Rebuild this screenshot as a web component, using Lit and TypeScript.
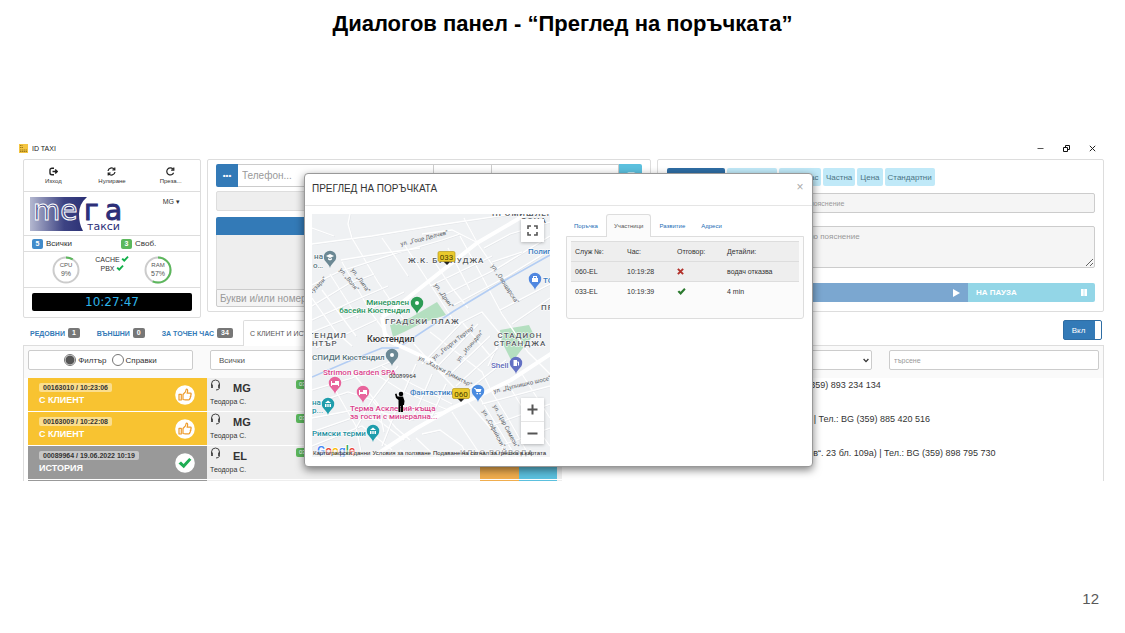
import { LitElement, html, svg, css } from "lit";
import { customElement, state } from "lit/decorators.js";
import { classMap } from "lit/directives/class-map.js";

const check = (color: string, size = 8) => html`<svg width=${size} height=${size} viewBox="0 0 10 10" aria-hidden="true">
  <path d="M0.6 5.4 L2.4 3.8 L4 5.4 L8 1.2 L9.6 2.7 L4.1 8.8 Z" fill=${color} />
</svg>`;

@customElement("city-map")
class CityMap extends LitElement {
  static styles = css`
    :host { display: block; position: relative; overflow: hidden; background: #eff1f3; }
    .canvas { position: absolute; top: 0; left: 0; font-family: Roboto, "Liberation Sans", sans-serif; }
    .street { fill: none; stroke: #fff; stroke-width: 1.3; }
    .thin { fill: none; stroke: #dfe2e6; stroke-width: 0.8; }
    .road { fill: none; stroke: #fff; stroke-width: 4; stroke-linejoin: round; }
    .river { fill: none; stroke: #b3cdf3; stroke-width: 1.6; }
    .park { fill: #b4dfc0; }
    .label { font-size: 8px; font-weight: 500; paint-order: stroke; stroke: #fff; stroke-width: 1px; }
    .area { font-size: 8px; fill: #55595e; letter-spacing: 1px; font-weight: 500; }
    .town { font-size: 9px; fill: #333; }
    .way { font-size: 6px; fill: #62666b; font-weight: 400; }
    .end { text-anchor: end; }
    .mid { text-anchor: middle; }
    .green { fill: #25925a; }
    .pink { fill: #d8408a; }
    .teal { fill: #1b8f9e; }
    .blue { fill: #3a7cc0; }
    .slate { fill: #56737c; }
    .indigo { fill: #5b69b8; }
    .code { font-size: 6px; fill: #333; }
    .plate { font-size: 8px; fill: #4d4100; text-anchor: middle; }
    .google { font-size: 12px; font-weight: 500; paint-order: stroke; stroke: #fff; stroke-width: 1.5px; }
    button { border: 0; padding: 0; margin: 0; background: #fff; width: 23px; height: 23px; display: grid; place-items: center; }
    .full, .zoom { position: absolute; right: 6px; box-shadow: 0 1px 3px rgba(0, 0, 0, 0.25); background: #fff; }
    .full { top: 5px; }
    .zoom { bottom: 13px; }
    .zoom button + button { border-top: 1px solid #e6e6e6; }
    .legal { position: absolute; left: 0; right: 0; bottom: 0; padding: 0 4px 0 1px; display: flex; justify-content: space-between; font: 6px/7px "Liberation Sans", sans-serif; background: rgba(245, 245, 245, 0.5); }
    .legal a { color: #222; text-decoration: none; white-space: nowrap; }
  `;

  pins: [number, number, string, string][] = [
    [18, 43, "#6b8894", "M-4 -1 L0 -3 L4 -1 L0 1Z M-2 1 L0 2 L2 1 V2.5 L0 3.5 L-2 2.5Z"],
    [105, 89, "#2c9c55", "M-2 0 A2 2 0 1 0 2 0 A2 2 0 1 0 -2 0Z"],
    [223, 65, "#5087e0", "M-3 -1 H3 V3 H-3Z M-2 -1 V-3 H2 V-1 H1 V-2 H-1 V-1Z"],
    [80, 141, "#6b8894", "M-2 0 A2 2 0 1 0 2 0 A2 2 0 1 0 -2 0Z"],
    [23, 169, "#e8649c", "M-4 -2 H-3 V0 H0 V-2 H4 V3 H3 V2 H-3 V3 H-4Z"],
    [51, 178, "#e8649c", "M-4 -2 H-3 V0 H0 V-2 H4 V3 H3 V2 H-3 V3 H-4Z"],
    [16, 190, "#1f9dac", "M-3 -1 L0 -3.5 L3 -1Z M-3 0 H-1.5 V3 H-3Z M-.7 0 H.7 V3 H-.7Z M1.5 0 H3 V3 H1.5Z"],
    [61, 217, "#1f9dac", "M-3 -1 L0 -3.5 L3 -1Z M-3 0 H-1.5 V3 H-3Z M-.7 0 H.7 V3 H-.7Z M1.5 0 H3 V3 H1.5Z"],
    [166, 177, "#4a8be0", "M-4 -3 H-2.5 L-2 -2 H3.5 L2.5 1 H-1.5 L-3 -2.2 H-4Z M-1.5 2 H0 V3.2 H-1.5Z M1.3 2 H2.8 V3.2 H1.3Z"],
    [204, 149, "#6371c4", "M-2.5 -3 H1 V3 H-2.5Z M1.5 -2 L3 -1 V2.5 H2 V0 H1.5Z"],
  ];

  streets = [
    "M0 14 L22 22 M0 30 L60 22 L120 12 L200 0", "M38 0 L36 10 L40 24 L66 68 L92 106", "M0 71 L26 58 L88 38 L130 26 L148 20",
    "M29 46 L66 40 L108 34", "M18 60 L46 104 M30 48 L60 100 L78 124", "M0 92 L36 70 L62 60", "M0 106 L48 84 L76 72",
    "M0 118 L56 96 L92 78", "M4 134 L64 106", "M0 84 L24 118 L40 132", "M10 76 L44 122", "M70 24 L84 44 L96 62", "M92 30 L118 70 L140 104",
    "M148 22 L172 66 L190 100 L216 138 L238 160", "M152 4 L166 30 L184 56", "M110 20 L140 16 L164 28", "M118 72 L180 42", "M130 82 L186 54 L238 22",
    "M140 92 L196 62 L238 36", "M120 44 L140 74 L156 94", "M136 34 L158 76", "M172 34 L198 20 L238 8", "M180 48 L210 38", "M200 110 L238 84",
    "M188 96 L238 70", "M142 112 L170 98 L190 122 L176 152", "M150 108 L180 144", "M118 118 L170 158 L178 174", "M102 130 L146 178",
    "M110 150 L150 108 M124 154 L166 110 M136 162 L178 122 M144 172 L186 134 M156 176 L194 146", "M0 176 L40 164 L82 146", "M0 190 L36 178 L60 186 L84 214 L98 226",
    "M0 204 L52 194 L98 206 L130 198", "M0 218 L40 204 L66 206 L92 226", "M0 232 L50 212 L70 228 L80 236", "M20 170 L44 212 L50 243",
    "M40 158 L66 190 L72 218", "M60 158 L92 178 L136 196", "M70 152 L100 170 L140 190", "M86 152 L60 186 L44 214", "M104 150 L84 196 L70 232",
    "M120 160 L100 206", "M134 170 L118 206", "M140 198 L170 243", "M110 220 L128 216 L150 232 L156 243", "M104 224 L124 243",
    "M156 188 L180 216 L196 243", "M168 184 L190 220 L204 243", "M180 178 L196 204 L218 243", "M196 170 L212 196 L238 232", "M210 160 L238 204",
    "M170 190 L238 172", "M178 212 L238 190", "M188 232 L238 214", "M88 236 L100 243",
  ];

  render() {
    return html`
      <svg class="canvas" width="238" height="243" viewBox="0 0 238 243" role="img" aria-label="Кюстендил">
        <path class="park" d="M125 88 L134 101 L110 109 L92 118 L81 123 L78 111 L98 104Z M188 116 L217 111 L222 121 L214 130 L200 148 L189 126Z" />
        ${this.streets.map((d) => svg`<path class="thin" d=${d} transform="translate(0.7 0.7)" /><path class="street" d=${d} />`)}
        <path class="river" d="M0 163 L35 148 L70 134 L86 134 L142 97 L190 68 L238 41" />
        <path class="road" d="M70 103 L78 98 L165 29 L218 -2 M70 103 L74 126 L88 132 L118 146 L134 160 M56 246 L105 214 L140 194 L158 186 L199 166 L240 139" />
        ${this.pins.map(([x, y, color, glyph]) => svg`<g transform="translate(${x} ${y})">
          <path fill=${color} d="M0 11 C-1 6 -6.2 5 -6.2 0 A6.2 6.2 0 0 1 6.2 0 C6.2 5 1 6 0 11Z" /><path fill="#fff" d=${glyph} />
        </g>`)}
        <g class="label">
          <text class="area mid" x="214" y="2">ПРОМИШЛЕНА</text><text class="area mid" x="222" y="9">ЗОНА</text>
          <text class="slate end" x="11" y="45">на</text><text class="slate" x="1" y="54">о…</text>
          <text class="area" x="96" y="49">Ж.К. БУЗЛУДЖА</text>
          <text class="green end" x="97" y="91">Минерален</text><text class="green end" x="98" y="99">басейн Кюстендил</text>
          <text class="area" x="73" y="110">ГРАДСКИ ПЛАЖ</text>
          <text class="town" x="55" y="128">Кюстендил</text>
          <text class="area end" x="35" y="124">ТЕНДИЛ</text><text class="area" x="0" y="132">НТЪР</text>
          <text class="area mid" x="208" y="124">СТАДИОН</text><text class="area mid" x="208" y="132">СТРАНДЖА</text>
          <text class="blue" x="216" y="40">Полигон</text><text class="blue" x="231" y="69">ТОП</text><text class="area" x="229" y="96">ПРОМ</text>
          <text class="slate" x="0" y="146">СПИДИ Кюстендил</text>
          <text class="pink" x="11" y="161">Strimon Garden SPA</text>
          <text class="blue" x="98" y="181">Фантастико</text>
          <text class="pink" x="38" y="197">Терма Асклепий-къща</text><text class="pink" x="38" y="205">за гости с минерална...</text>
          <text class="teal" x="0" y="191">на</text><text class="teal" x="0" y="199">р...</text>
          <text class="teal" x="0" y="222">Римски терми</text>
          <text class="indigo" x="179" y="154">Shell</text>
          <text class="area" x="148" y="241">ИЛЬО ВОЙВОДА</text>
        </g>
        <g class="way">
          <text transform="translate(89 32) rotate(-14)">ул. „Гоце Делчев“</text>
          <text transform="translate(27 56) rotate(52)">ул. „Воля“</text>
          <text transform="translate(39 56) rotate(55)">ул. „Липа“</text>
          <text transform="translate(0 80) rotate(-45)">тузари“</text>
          <text transform="translate(122 71) rotate(55)">ул. „Дрин“</text>
          <text transform="translate(179 52) rotate(57)">ул. „Овощарска“</text>
          <text transform="translate(122 146) rotate(-38)">ул. „Георги Тертер“</text>
          <text transform="translate(147 148) rotate(-50)">ул. „Илинден“</text>
          <text transform="translate(106 145) rotate(28)">ул. „Хаджи Димитър“</text>
          <text transform="translate(182 179) rotate(-13)">ул. „Дупнишко шосе“</text>
          <text transform="translate(181 192) rotate(62)">ул. „Цар Симеон“</text>
          <text transform="translate(170 197) rotate(62)">ул. „Софийски“</text>
        </g>
        <text class="code" x="77" y="164">00089964</text>
        <path fill="#222" d="M131 47 H139 L135 51Z M145 184 H153 L149 188Z" />
        <rect x="126" y="37.500" width="17" height="10" rx="1.500" fill="#eac92c" stroke="#b89a1c" stroke-width="0.700" />
        <text class="plate" x="134.500" y="45.500">033</text>
        <rect x="140.500" y="174.500" width="17" height="10" rx="1.500" fill="#eac92c" stroke="#b89a1c" stroke-width="0.700" />
        <text class="plate" x="149" y="182.500">060</text>
        <circle cx="89" cy="180" r="2.300" />
        <path d="M83 180 L84.500 179.500 L85.500 182.500 H91 L92.500 187 L92 191 H91 V198 H89 V192 H88.500 V198 H86.500 V186 L84 184Z" />
        <text class="google" x="5" y="241"><tspan fill="#4285f4">G</tspan><tspan fill="#ea4335">o</tspan><tspan fill="#fbbc05">o</tspan><tspan fill="#4285f4">g</tspan><tspan fill="#34a853">l</tspan><tspan fill="#ea4335">e</tspan></text>
      </svg>
      <button class="full" aria-label="Цял екран">
        <svg width="11" height="11" viewBox="0 0 11 11" fill="none" stroke="#555" stroke-width="1.600"><path d="M1 4V1H4 M7 1H10V4 M10 7V10H7 M4 10H1V7" /></svg>
      </button>
      <div class="zoom">
        <button aria-label="Увеличаване"><svg width="11" height="11" viewBox="0 0 11 11" stroke="#555" stroke-width="2"><path d="M0.500 5.500H10.500M5.500 0.500V10.500" /></svg></button>
        <button aria-label="Намаляване"><svg width="11" height="11" viewBox="0 0 11 11" stroke="#555" stroke-width="2"><path d="M0.500 5.500H10.500" /></svg></button>
      </div>
      <div class="legal"><a href="#">Картографски данни</a><a href="#">Условия за ползване</a><a href="#">Подаване на сигнал за грешка в картата</a></div>
    `;
  }
}

@customElement("order-dialog")
class OrderDialog extends LitElement {
  static styles = css`
    :host { display: block; background: #fff; border: 1px solid #999; border-radius: 4px; box-shadow: 0 3px 9px rgba(0, 0, 0, 0.5); box-sizing: border-box; }
    header { display: flex; justify-content: space-between; align-items: flex-start; padding: 8px 8px 9px 7px; border-bottom: 1px solid #e5e5e5; }
    h2 { margin: 0; font-weight: 400; font-size: 10px; line-height: 14px; color: #333; }
    button { font-family: inherit; }
    .close { border: 0; background: none; padding: 0; font-size: 12px; line-height: 10px; color: #aaa; width: 8px; }
    .body { display: grid; grid-template-columns: 238px 1fr; gap: 16px; padding: 8px 8px 9px 7px; }
    city-map { height: 243px; }
    .tabs { display: flex; height: 23px; position: relative; margin-bottom: -1px; }
    .tab { border: 1px solid transparent; border-bottom: 0; background: none; padding: 0 7px; font-size: 6px; color: #1a6cb5; border-radius: 3px 3px 0 0; }
    .tab.active { color: #555; background: #fbfbfb; border-color: #ddd; }
    .panel { border: 1px solid #ddd; border-radius: 0 0 3px 3px; background: #fbfbfb; padding: 4px 4px 17px; }
    table { width: 100%; border-collapse: collapse; font-size: 7px; color: #333; table-layout: fixed; }
    th, td { font-weight: 400; text-align: left; padding: 0 4px; height: 19px; line-height: 10px; border-top: 1px solid #ddd; }
    thead th, tbody tr:first-child td { background: #eee; }
    th:nth-child(1) { width: 44px; }
    th:nth-child(2), th:nth-child(3) { width: 42px; }
    svg { display: block; }
  `;

  @state() active = "Участници";
  tabs = ["Поръчка", "Участници", "Развитие", "Адреси"];

  render() {
    return html`
      <header><h2>ПРЕГЛЕД НА ПОРЪЧКАТА</h2><button class="close" aria-label="Затвори">×</button></header>
      <div class="body">
        <city-map></city-map>
        <div>
          <div class="tabs" role="tablist">
            ${this.tabs.map((t) => html`<button role="tab" class=${classMap({ tab: true, active: t === this.active })} @click=${() => (this.active = t)}>${t}</button>`)}
          </div>
          <div class="panel">
            <table>
              <thead><tr><th>Служ №:</th><th>Час:</th><th>Отговор:</th><th>Детайли:</th></tr></thead>
              <tbody>
                <tr><td>060-EL</td><td>10:19:28</td><td><svg width="7" height="7" viewBox="0 0 8 8" aria-label="не"><path d="M1 1L7 7M7 1L1 7" stroke="#b2302a" stroke-width="2.200" /></svg></td><td>водач отказва</td></tr>
                <tr><td>033-EL</td><td>10:19:39</td><td>${check("#2c7a2f", 9)}</td><td>4 min</td></tr>
              </tbody>
            </table>
          </div>
        </div>
      </div>
    `;
  }
}

interface Order { code: string; status: string; done: boolean; firm: string; details: string; }

@customElement("app-root")
class AppRoot extends LitElement {
  static styles = css`
    :host { display: flex; flex-direction: column; min-height: 100vh; background: #fff; font-family: "Liberation Sans", Arial, sans-serif; color: #333; }
    * { box-sizing: border-box; }
    svg { display: block; flex: none; }
    button, input, select, textarea { font-family: inherit; margin: 0; }
    .title { margin: 0; padding-top: 10px; height: 140px; text-align: center; font-size: 22px; line-height: 28px; font-weight: 700; color: #000; }
    .page-no { margin: auto 26px 24px; text-align: right; font-size: 15px; line-height: 20px; color: #595959; }
    .window { position: relative; margin: 0 21px 0 12px; }
    order-dialog { position: absolute; top: 33px; left: calc(50% - 254px); width: 509px; z-index: 2; }
    .screen { height: 341px; overflow: hidden; padding-left: 11px; }

    .titlebar { display: flex; align-items: center; height: 17px; padding-right: 8px; margin-left: -4px; font-size: 7px; color: #222; gap: 4px; }
    .controls { margin-left: auto; display: flex; gap: 19px; }
    .controls button { border: 0; background: none; padding: 0; }

    .top { display: grid; grid-template-columns: 178px 445fr 448fr; gap: 6px; align-items: start; margin-top: 2px; }
    .card { border: 1px solid #ddd; border-radius: 2px; background: #fff; }
    .tools { display: grid; grid-template-columns: repeat(3, 1fr); height: 32px; border-bottom: 1px solid #ddd; }
    .tools button { border: 0; background: none; padding: 1px 0 0; font-size: 6px; line-height: 8px; color: #333; display: flex; flex-direction: column; align-items: center; justify-content: center; gap: 1px; }
    .brand { display: flex; justify-content: space-between; align-items: flex-start; height: 44px; padding: 4px 20px 0 6px; border-bottom: 1px solid #ddd; }
    .brand svg { overflow: visible; }
    .firm { border: 0; background: none; padding: 2px 0; font-size: 7px; line-height: 8px; color: #333; }
    .counts { display: grid; grid-template-columns: 1fr 1fr; height: 16px; align-items: center; border-bottom: 1px solid #ddd; font-size: 8px; padding-left: 8px; }
    .count { display: flex; align-items: center; gap: 3px; }
    .count:last-child { padding-left: 5px; }
    .count b { width: 11px; height: 10px; border-radius: 2px; background: #428bca; color: #fff; font-size: 7px; line-height: 10px; text-align: center; }
    .count .free { background: #5cb85c; }
    .stats { display: flex; justify-content: space-between; height: 36px; padding: 0 28px; border-bottom: 1px solid #ddd; align-items: center; font-size: 7px; line-height: 9px; }
    .links { display: grid; justify-items: center; align-self: start; padding-top: 3px; }
    .links span { display: flex; gap: 1px; white-space: nowrap; }
    .gauge text { text-anchor: middle; font-size: 7px; fill: #555; }
    .gauge .name { font-size: 6px; }
    .clock { margin: 5px 8px 6px; height: 18px; border-radius: 2px; background: #000; color: #2fb4e9; font: 12px/18px "DejaVu Sans", sans-serif; text-align: center; }

    .search { padding: 4px 8px; }
    .group { display: grid; grid-template-columns: 22px 1fr 58px 127px 23px; height: 23px; }
    .group input { border: 1px solid #ccc; border-left: 0; padding: 0 4px; font-size: 10px; min-width: 0; }
    .group button { border: 0; padding: 0; color: #fff; background: #337ab7; font-size: 8px; font-weight: 700; border-radius: 2px 0 0 2px; }
    .group .call { background: #5bc0de; border-radius: 0 2px 2px 0; }
    .readonly { display: block; width: 100%; height: 20px; margin: 4px 0 6px; background: #eee; border: 1px solid #ddd; border-radius: 2px; }
    .band { height: 18px; background: #337ab7; border-radius: 2px 2px 0 0; }
    .area { height: 54px; background: #eee; border: 1px solid #ddd; border-width: 0 1px; }
    .letters { display: block; width: 100%; height: 18px; border: 1px solid #ccc; background: #f4f4f4; border-radius: 0 0 2px 2px; padding: 0 3px; font-size: 10px; }
    ::placeholder { color: #999; opacity: 1; }

    .order { padding: 8px 8px 9px 9px; }
    .chips { display: flex; gap: 2px; height: 18px; }
    .chip { border: 0; border-radius: 2px; background: #c0e9f8; color: #4c7484; font-size: 8px; padding: 0 3px; white-space: nowrap; }
    .chip.main { width: 58px; background: #2e6da4; }
    .chip.mid { width: 50px; }
    .chip.late { width: 42px; text-align: right; }
    .note { display: block; width: 100%; height: 20px; margin: 7px 0 13px; border: 1px solid #ccc; border-radius: 2px; background: #f5f5f5; font-size: 7px; padding: 0 6px 0 118px; }
    .long { display: block; width: 100%; height: 42px; border: 1px solid #ccc; border-radius: 2px; background: #f5f5f5; font-size: 8px; line-height: 10px; padding: 5px 6px 0 113px; resize: vertical; }
    .send { display: grid; grid-template-columns: 1fr 127px; height: 19px; margin-top: 15px; }
    .send button { border: 0; display: flex; align-items: center; justify-content: flex-end; padding: 0 8px; background: #7ba7d0; color: #fff; font-size: 8px; font-weight: 700; }
    .send .pause { justify-content: space-between; background: #93d6e7; border-radius: 0 2px 2px 0; }

    .tabs { display: flex; align-items: stretch; height: 26px; margin-top: 2px; border-bottom: 1px solid #ddd; }
    .tab { border: 1px solid transparent; border-bottom: 0; background: none; padding: 0 9px 0 6px; font-size: 7px; font-weight: 700; color: #337ab7; display: flex; align-items: center; gap: 3px; white-space: nowrap; }
    .tab span { background: #777; color: #fff; border-radius: 2px; padding: 0 4px; font-size: 7px; line-height: 10px; }
    .tab.active { color: #555; font-weight: 400; border-color: #ddd; background: #fff; margin-bottom: -1px; border-radius: 2px 2px 0 0; }
    .toggle { margin: 0 2px 6px auto; width: 39px; height: 20px; padding: 0 8px 0 0; border: 1px solid #2e6da4; border-radius: 2px; color: #fff; font-size: 8px; background: linear-gradient(90deg, #337ab7 31px, #fff 31px); }

    .list { border: 1px solid #ddd; border-width: 0 1px; }
    .filters { display: grid; grid-template-columns: 165px 1fr 210px; gap: 17px; padding: 4px 4px 8px; background: #fafafa; }
    .filters > * { height: 20px; border: 1px solid #ccc; border-radius: 2px; background: #fff; }
    .kind { display: flex; align-items: center; justify-content: center; gap: 5px; font-size: 8px; }
    .kind label { display: flex; align-items: center; gap: 2px; }
    .kind input { appearance: none; width: 12px; height: 12px; border: 1px solid #767676; border-radius: 50%; }
    .kind input:checked { background: radial-gradient(#555 4px, #fff 5px); }
    .picker { display: flex; align-items: center; padding-right: 2px; }
    .pick { flex: 1; appearance: none; border: 0; background: none; font-size: 8px; color: #555; padding: 0 8px; }
    .find { font-size: 7px; padding: 0 4px; }

    .row { display: grid; grid-template-columns: 179px 355px 1fr; height: 34px; padding-left: 4px; }
    .state { display: flex; justify-content: space-between; align-items: center; background: #f8c331; color: #fff; padding: 0 12px 0 11px; border-bottom: 1px solid #fff; }
    .state.done { background: #999; }
    .code { display: block; width: max-content; padding: 0 4px; border-radius: 2px; background: rgba(255, 255, 255, 0.45); color: #333; font-size: 7px; line-height: 9px; font-weight: 700; }
    .status { display: block; margin-top: 3px; font-size: 9px; line-height: 11px; font-weight: 700; }
    .who { display: grid; grid-template-columns: 18px 68px 20px 1fr auto; grid-template-rows: 18px 14px; padding: 0 5px 0 3px; background: #eee; border-bottom: 1px solid #fff; }
    .firm-name { font-size: 11px; line-height: 20px; padding-left: 5px; }
    .driver { grid-column: 1 / 3; grid-row: 2; font-size: 7px; line-height: 12px; }
    .eta { grid-column: 3; grid-row: 1; height: 9px; margin-top: 2px; background: #5cb85c; color: #fff; font-size: 6px; line-height: 9px; padding-left: 3px; border-radius: 2px; }
    .acts { grid-column: 5; grid-row: 1 / 3; display: grid; grid-template-columns: 39px 38px; height: 33px; }
    .acts button { border: 0; padding: 0; background: #f0ad4e; }
    .acts button + button { background: #5bc0de; }
    .details { font-size: 9px; line-height: 14px; padding: 0 6px; white-space: nowrap; overflow: hidden; }
    .headset { margin-top: 1px; }
  `;

  orders: Order[] = [
    { code: "00163010 / 10:23:06", status: "С КЛИЕНТ", done: false, firm: "MG", details: "10:23 | Кюстендил, ул. „Демокрация“ 41 (вх. А) | Тел.: BG (359) 893 234 134" },
    { code: "00163009 / 10:22:08", status: "С КЛИЕНТ", done: false, firm: "MG", details: "10:22 | Кюстендил, ул. „Цар Освободител“ 11 (пред входа) | Тел.: BG (359) 885 420 516" },
    { code: "00089964 / 19.06.2022 10:19", status: "ИСТОРИЯ", done: true, firm: "EL", details: "10:19 | Кюстендил, жк. „Запад“ (ул. „Хаджи Димитър Асенов“. 23 бл. 109а) | Тел.: BG (359) 898 795 730" },
    { code: "00089963 / 19.06.2022 10:15", status: "ИСТОРИЯ", done: true, firm: "EL", details: "" },
  ];

  gauge(name: string, value: number) {
    return html`<svg class="gauge" width="28" height="28" viewBox="0 0 28 28">
      <circle cx="14" cy="14" r="12.500" fill="#fff" stroke="#ccc" stroke-width="2" />
      <circle cx="14" cy="14" r="12.500" fill="none" stroke="#5cb85c" stroke-width="2" pathLength="100" stroke-dasharray="${value} 100" transform="rotate(-90 14 14)" />
      <text class="name" x="14" y="11">${name}</text><text x="14" y="20">${value}%</text>
    </svg>`;
  }

  badge(done: boolean) {
    return html`<svg width="20" height="20" viewBox="0 0 20 20"><circle cx="10" cy="10" r="9.800" fill="#fff" />${done
      ? svg`<path d="M3.500 10.600 L6 8.600 L8.600 11 L14.200 5 L16.400 6.800 L8.800 15.200Z" fill="#1fae54" />`
      : svg`<path d="M4 9.300H6.300V15H4Z M8 14.500 V9.500 L10.400 6.800 C11 5.900 10.700 4.300 11.600 4.200 C12.900 4.100 12.900 6 12.100 8.200 H15.300 C16.500 8.200 16.500 9.900 15.500 10 C16.400 10.500 16 11.700 15.200 11.700 C15.800 12.300 15.500 13.300 14.700 13.300 C15 14.200 14.500 14.900 13.600 14.900 H10.300Z" fill="none" stroke="#ee9c2e" stroke-width="1.200" stroke-linejoin="round" />`}</svg>`;
  }

  renderRow(o: Order) {
    return html`<div class="row">
      <div class=${classMap({ state: true, done: o.done })}>
        <div><span class="code">${o.code}</span><span class="status">${o.status}</span></div>${this.badge(o.done)}
      </div>
      <div class="who">
        <svg class="headset" width="11" height="12" viewBox="0 0 11 12" fill="none" stroke="#444"><path d="M1.500 7V5a4 4 0 0 1 8 0V7" /><path d="M2 5.500V9M9 5.500V9" stroke-width="1.800" /><path d="M9.500 9Q9 11 6 11" /></svg>
        <b class="firm-name">${o.firm}</b><span class="driver">Теодора С.</span><span class="eta">033</span>
        <div class="acts"><button aria-label="Редакция"></button><button aria-label="Преглед"></button></div>
      </div>
      <div class="details">${o.details}</div>
    </div>`;
  }

  render() {
    return html`
      <h1 class="title">Диалогов панел - “Преглед на поръчката”</h1>
      <main class="window">
        <div class="screen">
          <div class="titlebar">
            <svg width="9" height="9" viewBox="0 0 9 9"><rect width="9" height="9" fill="#f4c542" /><path d="M1 1.500H3.500M1 3.500H4M1 6H8M1 7.500H8" stroke="#8a6a10" stroke-width="0.800" stroke-dasharray="1.500 0.500" /></svg>
            <span>ID TAXI</span>
            <div class="controls">
              <button aria-label="Минимизиране"><svg width="7" height="7" viewBox="0 0 7 7" stroke="#555"><path d="M0.500 3.500H6.500" /></svg></button>
              <button aria-label="Възстановяване"><svg width="7" height="7" viewBox="0 0 7 7" fill="none" stroke="#111"><path d="M0.500 2.500H4.500V6.500H0.500ZM2.500 2.500V0.500H6.500V4.500H4.500" /></svg></button>
              <button aria-label="Изход"><svg width="7" height="7" viewBox="0 0 7 7" stroke="#222"><path d="M0.800 0.800L6.200 6.200M6.200 0.800L0.800 6.200" /></svg></button>
            </div>
          </div>
          <div class="top">
            <section class="card">
              <div class="tools">
                <button><svg width="9" height="9" viewBox="0 0 9 9" fill="none" stroke="#222" stroke-width="1.400"><path d="M5 1.200H3Q1 1.200 1 3V6Q1 7.800 3 7.800H5M3.500 4.500H8M6.200 2.500L8.200 4.500L6.200 6.500" /></svg>Изход</button>
                <button><svg width="9" height="9" viewBox="0 0 9 9" fill="none" stroke="#222" stroke-width="1.200"><path d="M1 4A3.500 3.500 0 0 1 7.300 2.400M8 5A3.500 3.500 0 0 1 1.700 6.600M7.800 0.500V3H5.300M1.200 8.500V6H3.700" /></svg>Нулиране</button>
                <button><svg width="9" height="9" viewBox="0 0 9 9" fill="none" stroke="#222" stroke-width="1.200"><path d="M7.600 5.700A3.500 3.500 0 1 1 7 2.200M7.800 0.500V3.200H5.100" /></svg>Преза...</button>
              </div>
              <div class="brand">
                <svg width="98" height="36" viewBox="0 0 98 36" font-family="DejaVu Sans" role="img" aria-label="мега такси">
                  <defs><linearGradient id="navy"><stop offset="0" stop-color="#b4b8d0" /><stop offset="0.600" stop-color="#3d4383" /><stop offset="1" stop-color="#2a2f74" /></linearGradient></defs>
                  <path d="M0 1H57Q49 8 49 18Q49 28 53 35H0Z" fill="url(#navy)" />
                  <g font-size="28" stroke-width="1"><text x="3" y="24" fill="#4a508c" stroke="#fff">me</text><text y="24" fill="#2c2f78" stroke="#2c2f78"><tspan x="54">г</tspan><tspan x="75">а</tspan></text></g>
                  <text x="57" y="34" font-size="11" fill="#2c2f78">такси</text>
                </svg>
                <button class="firm">MG ▾</button>
              </div>
              <div class="counts"><span class="count"><b>5</b>Всички</span><span class="count"><b class="free">3</b>Своб.</span></div>
              <div class="stats">${this.gauge("CPU", 9)}<div class="links"><span>CACHE ${check("#12b04a", 8)}</span><span>PBX ${check("#12b04a", 8)}</span></div>${this.gauge("RAM", 57)}</div>
              <div class="clock">10:27:47</div>
            </section>
            <section class="card search">
              <div class="group"><button aria-label="Меню">•••</button><input placeholder="Телефон..." aria-label="Телефон" /><input aria-label="Клиент" /><input aria-label="Позивна" /><button class="call" aria-label="Обаждане">☏</button></div>
              <input class="readonly" readonly aria-label="Адрес" />
              <div class="band"></div><div class="area"></div>
              <input class="letters" placeholder="Букви и/или номер" aria-label="Букви и/или номер" />
            </section>
            <section class="card order">
              <div class="chips"><button class="chip main" aria-label="Сега"></button><button class="chip mid" aria-label="Друг град"></button><button class="chip late">Точен час</button><button class="chip">Частна</button><button class="chip">Цена</button><button class="chip">Стандартни</button></div>
              <input class="note" placeholder="Кратко пояснение" aria-label="Кратко пояснение" />
              <textarea class="long" placeholder="Подробно пояснение" aria-label="Подробно пояснение"></textarea>
              <div class="send"><button aria-label="Изпрати"><svg width="7" height="8" viewBox="0 0 7 8"><path d="M0 0L7 4L0 8Z" fill="#fff" /></svg></button><button class="pause">НА ПАУЗА<svg width="6" height="7" viewBox="0 0 6 7"><path d="M0 0H2.700V7H0ZM3.300 0H6V7H3.300Z" fill="#fff" /></svg></button></div>
            </section>
          </div>
          <nav class="tabs">
            <button class="tab">РЕДОВНИ <span>1</span></button><button class="tab">ВЪНШНИ <span>0</span></button><button class="tab">ЗА ТОЧЕН ЧАС <span>34</span></button><button class="tab active">С КЛИЕНТ И ИСТОРИЯ</button>
            <button class="toggle" aria-pressed="true">Вкл</button>
          </nav>
          <section class="list">
            <div class="filters">
              <div class="kind"><label><input type="radio" name="kind" checked />Филтър</label><label><input type="radio" name="kind" />Справки</label></div>
              <div class="picker"><select class="pick" aria-label="Вид"><option>Всички</option></select><svg width="6" height="5" viewBox="0 0 6 5" fill="none" stroke="#333" stroke-width="1.300"><path d="M0.600 1L3 3.600L5.400 1" /></svg></div>
              <input class="find" placeholder="търсене" aria-label="търсене" />
            </div>
            ${this.orders.map((o) => this.renderRow(o))}
          </section>
        </div>
        <order-dialog role="dialog" aria-label="Преглед на поръчката"></order-dialog>
      </main>
      <footer class="page-no">12</footer>
    `;
  }
}
